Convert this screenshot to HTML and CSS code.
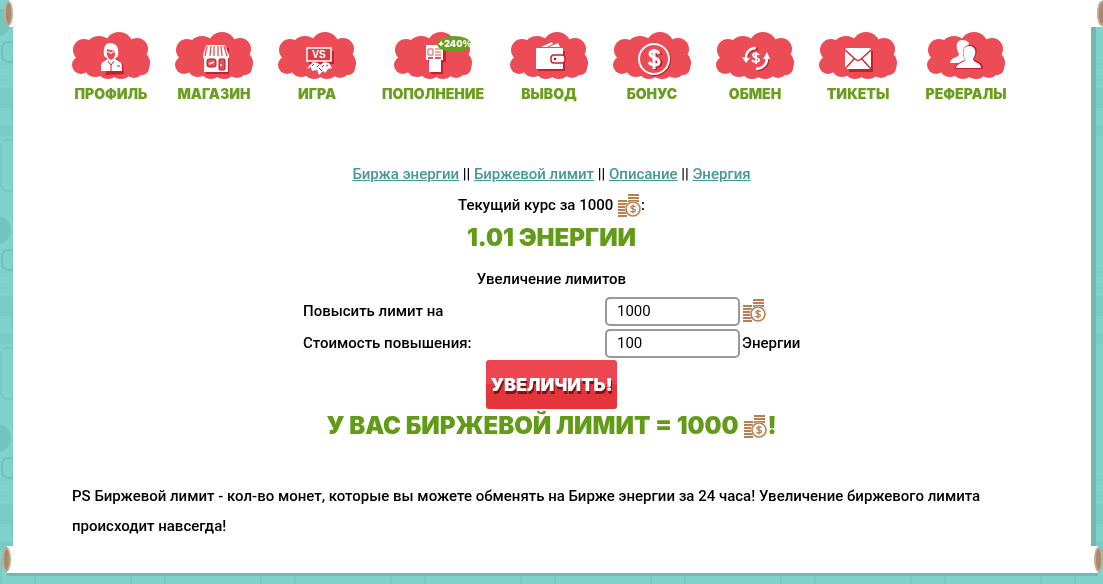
FILE: index.html
```html
<!DOCTYPE html>
<html lang="ru">
<head>
<meta charset="utf-8">
<title>Биржевой лимит</title>
<link rel="stylesheet" href="styles.css">
</head>
<body>
<svg class="defs" width="0" height="0" aria-hidden="true">
  <defs>
    <g id="cloud" fill="#ec4c56">
      <circle cx="12" cy="18" r="11"/><circle cx="9" cy="33" r="9"/><circle cx="27" cy="18" r="14"/><circle cx="47" cy="14" r="14"/><circle cx="65" cy="17" r="11"/><circle cx="66" cy="31" r="12"/><circle cx="70" cy="36" r="7"/><circle cx="23" cy="34" r="11"/><circle cx="36" cy="36" r="11"/><circle cx="49" cy="35" r="12"/><circle cx="62" cy="36" r="10"/><path d="M8 15h60v22H8z"/>
    </g>
    <g id="coins">
      <path d="M11 1h11M11 4h11M11 7h11M1 7h9M1 10h9M1 13h9M1 16h9M1 19h9M1 22h9" stroke="#b8804f" stroke-width="2" fill="none"/>
      <circle cx="16" cy="15" r="8" fill="#fff"/><circle cx="16" cy="15" r="7" fill="#fff" stroke="#b8804f" stroke-width="1.6"/>
      <path d="M18.5 12.8c-1-1.300-4.700-1.300-4.700.5 0 2 4.700 1.200 4.700 3.300 0 1.900-3.700 1.900-5 .4M16 10.500v9" stroke="#b8804f" stroke-width="1.3" fill="none"/>
    </g>
    <pattern id="tiles" width="130" height="208" patternUnits="userSpaceOnUse">
      <path d="M0 0h130v208H0z" fill="#80d2ca"/>
      <path d="M0 88h130v20H0zM0 126h130v10H0z" fill="#7acbc4"/>
      <circle cx="-3" cy="22" r="14" fill="#73c5be"/>
      <path d="M0 64h130M0 80h130" stroke="#76c9c1"/>
      <rect x="2" y="42" width="22" height="20" rx="6" fill="none" stroke="#70c3bc" stroke-width="2"/>
      <rect x="12" y="96" width="40" height="26" rx="5" fill="none" stroke="#73c5be"/>
      <rect x="1" y="140" width="34" height="51" rx="6" fill="none" stroke="#70c3bc"/>
      <rect x="70" y="30" width="45" height="24" rx="7" fill="none" stroke="#76c9c1"/>
    </pattern>
  </defs>
</svg>
<svg class="backdrop" aria-hidden="true"><rect width="100%" height="100%" fill="url(#tiles)"/></svg>

<div class="page">
  <div class="roll roll-top"></div>
  <div class="sheet">
    <nav class="menu">
      <a class="item" href="#"><svg class="icon" viewBox="0 0 78 48"><use href="#cloud"/>
        <path d="M33 43l19-1-1-10-7-6 2-10z" fill="#c8202b"/>
        <path d="M38 11c-5 0-7 5-6 13l4 3-5 3c-2 1-2 3-2 9h21c0-6 0-8-2-9l-5-3 3-3c1-8-1-13-8-13z" fill="#fff"/>
        <path d="M35 17l8 2c1 4-1 8-4 9-3-1-5-5-4-11z" fill="#ec4c56"/><path d="M34 20h4l1 2 1-2h4" fill="none" stroke="#fff"/><path d="M36 29l3 4 3-4M39 33v6M45 34h3" fill="none" stroke="#c8202b"/></svg><span>ПРОФИЛЬ</span></a>
      <a class="item" href="#"><svg class="icon" viewBox="0 0 78 48"><use href="#cloud"/>
        <path d="M31 16h23v26H31z" fill="#c8202b"/><path d="M31 13h19l4 10v3h-1v14H29V26h-1v-3z" fill="#fff"/>
        <path d="M32 14l-2 10M36 14l-1 10M39 14v10M43 14v10M46 14l1 10M49 14l3 10" stroke="#ec4c56" stroke-width="1.3"/><rect x="32" y="27" width="9" height="8" rx="2" fill="#ec4c56" stroke="#b81822"/><rect x="44" y="27" width="6" height="11" rx="1" fill="#ec4c56" stroke="#b81822"/><path d="M34 32l5-2M45 33h2" stroke="#fff" stroke-width="1.5"/></svg><span>МАГАЗИН</span></a>
      <a class="item" href="#"><svg class="icon" viewBox="0 0 78 48"><use href="#cloud"/>
        <path d="M31 19h25v13H31z" fill="#c8202b"/><rect x="29" y="16" width="24" height="13" fill="#df3943" stroke="#fff" stroke-width="1.5"/><text x="41" y="26" class="vs">VS</text>
        <path d="M31 34l4-4 5 1 2 2 4-3 5 1 3 5-4 1-3 4-2-2-4 4-2-5-5 1-1-4-4 2z" fill="#fff"/><path d="M34 34l2-2M39 35l2-2M44 35l2-2M48 34l2-1M41 36l3 3" stroke="#c8202b"/></svg><span>ИГРА</span></a>
      <a class="item item-wide" href="#"><svg class="icon" viewBox="0 0 78 48"><use href="#cloud"/>
        <path d="M34 15h18v15h-3v12H37V30h-3z" fill="#c8202b"/><path d="M32 13h17v15h-2v12H35V28h-3z" fill="#fff"/><path d="M34 17h5v6h-5zM41 17h6M41 20h6M41 23h6" fill="none" stroke="#ec4c56"/><path d="M34 26h5M41 26h6" stroke="#c8202b" stroke-width="1.5"/>
        <ellipse cx="60" cy="12" rx="17" ry="8" fill="#6b9e20"/><text x="61" y="15" class="bonus">+240%</text></svg><span>ПОПОЛНЕНИЕ</span></a>
      <a class="item" href="#"><svg class="icon" viewBox="0 0 78 48"><use href="#cloud"/>
        <path d="M28 19h27v20H28z" fill="#c8202b"/><path d="M31 15l11-5 1 2-6 3zM39 15l9-4 2 4z" fill="#fff"/><rect x="26" y="16" width="27" height="21" rx="1" fill="#fff"/><rect x="41" y="23" width="14" height="8" rx="3" fill="#fff" stroke="#c8202b" stroke-width="1.5"/><circle cx="45" cy="27" r="1.3" fill="#b81822"/></svg><span>ВЫВОД</span></a>
      <a class="item" href="#"><svg class="icon" viewBox="0 0 78 48"><use href="#cloud"/>
        <circle cx="42" cy="28" r="16" fill="#c8202b"/><circle cx="41" cy="27" r="15" fill="#ec4c56" stroke="#fff" stroke-width="2"/><path d="M48 23c-1-4-9-4-9 0 0 4 9 3 9 8 0 4-8 4-10 0M43 18v20" fill="none" stroke="#c8202b" stroke-width="3"/><path d="M46 22c-1-4-9-4-9 0 0 4 9 3 9 8 0 4-8 4-10 0M41 17v20" fill="none" stroke="#fff" stroke-width="3"/></svg><span>БОНУС</span></a>
      <a class="item" href="#"><svg class="icon" viewBox="0 0 78 48"><use href="#cloud"/>
        <path d="M42 17c-8 0-11 5-11 11M41 38c8 0 11-5 11-11" fill="none" stroke="#c8202b" stroke-width="2.5"/><g fill="none" stroke="#fff"><path d="M40 16c-7 0-10 5-10 10M40 37c8-1 11-5 11-11" stroke-width="2.5"/><path d="M43 23c-1-2-6-2-6 0 0 3 6 2 6 5s-6 2-7 0M40 20v12" stroke-width="1.8"/></g><path d="M26 25l8 1-4 5zM47 27l4-7 3 7z" fill="#fff"/></svg><span>ОБМЕН</span></a>
      <a class="item" href="#"><svg class="icon" viewBox="0 0 78 48"><use href="#cloud"/>
        <path d="M29 19h25v21H30z" fill="#c8202b"/><rect x="26" y="16" width="26" height="21" rx="2" fill="#fff"/><path d="M26 18l10 9q3 3 6 0l10-9M35 27l-9 10M43 27l9 10" fill="none" stroke="#d72b36" stroke-width="1.5"/></svg><span>ТИКЕТЫ</span></a>
      <a class="item item-mid" href="#"><svg class="icon" viewBox="0 0 78 48"><use href="#cloud"/>
        <path d="M35 8c-6 0-7 7-3 14 0 4-9 3-9 9h17V20l2-9c-1-2-4-3-7-3z" fill="#fff"/><path d="M43 14c-6 0-8 7-4 13 0 4-9 3-10 9h26c0-7-9-5-9-9 4-6 4-13-3-13z" fill="#c8202b" stroke="#c8202b" stroke-width="2"/><path d="M42 14c-6 0-7 7-4 13 1 4-8 3-9 9h25c0-6-8-5-8-9 4-6 3-13-4-13z" fill="#fff"/></svg><span>РЕФЕРАЛЫ</span></a>
    </nav>

    <main class="content">
      <p class="line links"><a href="#">Биржа энергии</a> || <a href="#">Биржевой лимит</a> || <a href="#">Описание</a> || <a href="#">Энергия</a></p>
      <p class="line rate">Текущий курс за 1000 <svg class="coin" viewBox="0 0 24 24"><use href="#coins"/></svg>:</p>
      <h2 class="title">1.01 ЭНЕРГИИ</h2>
      <form class="limits">
        <h3 class="caption">Увеличение лимитов</h3>
        <div class="row"><label for="amount">Повысить лимит на</label><input id="amount" type="text" value="1000"><svg class="coin" viewBox="0 0 24 24"><use href="#coins"/></svg></div>
        <div class="row"><label for="cost">Стоимость повышения:</label><input id="cost" type="text" value="100"><span>Энергии</span></div>
        <button class="raise" type="button">УВЕЛИЧИТЬ!</button>
      </form>
      <h2 class="title total">У ВАС БИРЖЕВОЙ ЛИМИТ = 1000 <svg class="coin" viewBox="0 0 24 24"><use href="#coins"/></svg>!</h2>
      <p class="note">PS Биржевой лимит - кол-во монет, которые вы можете обменять на Бирже энергии за 24 часа! Увеличение биржевого лимита происходит навсегда!</p>
    </main>
  </div>
  <div class="roll roll-bottom"></div>
</div>
</body>
</html>
```
FILE: styles.css
```css
*, *::before, *::after { box-sizing: border-box; }
body {
  margin: 0;
  background: #80d2ca;
  color: #000;
  font: 500 15px/30px Roboto, "Noto Sans", sans-serif;
  overflow-x: hidden;
}
p, h2, h3 { margin: 0; }
.defs { position: absolute; }
.backdrop { position: fixed; inset: 0; width: 100%; height: 100%; z-index: -1; }
.page { display: flex; flex-direction: column; min-height: 100vh; padding-bottom: 11px; }
.roll { position: relative; height: 27px; background: #fff; }
.roll::before, .roll::after {
  content: "";
  position: absolute;
  top: 1px;
  width: 9px;
  height: 25px;
  border: 2px solid #cfa688;
  border-radius: 50%;
  background: #a28a74;
}
.roll-top { margin: 0 1px 0 9px; }
.roll-top::before { left: -5px; }
.roll-top::after { right: -4px; }
.roll-bottom { margin: 0 5px 0 7px; box-shadow: 0 3px 0 #73b9b3; }
.roll-bottom::before { left: -5px; }
.roll-bottom::after { right: -5px; }
.sheet {
  flex: 1;
  margin: 0 12px 0 13px;
  padding: 5px 60px 4px 59px;
  background: #fff;
  box-shadow: 5px 0 0 #73b9b3;
}
.menu { display: flex; gap: 25px; }
.item {
  display: flex;
  flex-direction: column;
  align-items: center;
  width: 78px;
  color: #6b9e20;
  font: 900 14px/20px Inter, sans-serif;
  text-decoration: none;
  white-space: nowrap;
}
.item-wide { width: 104px; }
.item-mid { width: 88px; }
.item span { margin-top: 4px; }
.icon { width: 78px; height: 48px; overflow: visible; }
.vs { font: 700 10px "Liberation Sans", sans-serif; fill: #fff; text-anchor: middle; }
.bonus { font: 900 9px Inter, sans-serif; fill: #fff; text-anchor: middle; }
.content { padding-top: 55px; }
.line { text-align: center; line-height: 31px; }
.links a { color: #429b94; }
.coin { width: 24px; height: 24px; vertical-align: middle; }
.title {
  color: #629b17;
  font: 900 24px/34px Inter, sans-serif;
  text-align: center;
  white-space: nowrap;
}
.limits { display: flex; flex-direction: column; align-items: center; padding-top: 8px; }
.caption { font-size: 15px; font-weight: 500; line-height: 32px; }
.row {
  display: grid;
  grid-template-columns: 300px 135px 58px;
  gap: 2px;
  align-items: center;
  height: 32px;
}
.row input {
  width: 100%;
  height: 29px;
  padding: 0 10px;
  border: 2px solid #999;
  border-radius: 5px;
  background: #fff;
  color: #000;
  font: 400 15px Roboto, sans-serif;
}
.raise {
  height: 49px;
  margin-top: 1px;
  padding: 0 5px;
  border: 0;
  border-radius: 3px;
  background: linear-gradient(#ec4751 50%, #e4343c 50%);
  color: #fff;
  font: 900 18px Inter, sans-serif;
  text-shadow: 1px 3px 0 #7c1519;
}
.note { margin-top: 38px; }
```
